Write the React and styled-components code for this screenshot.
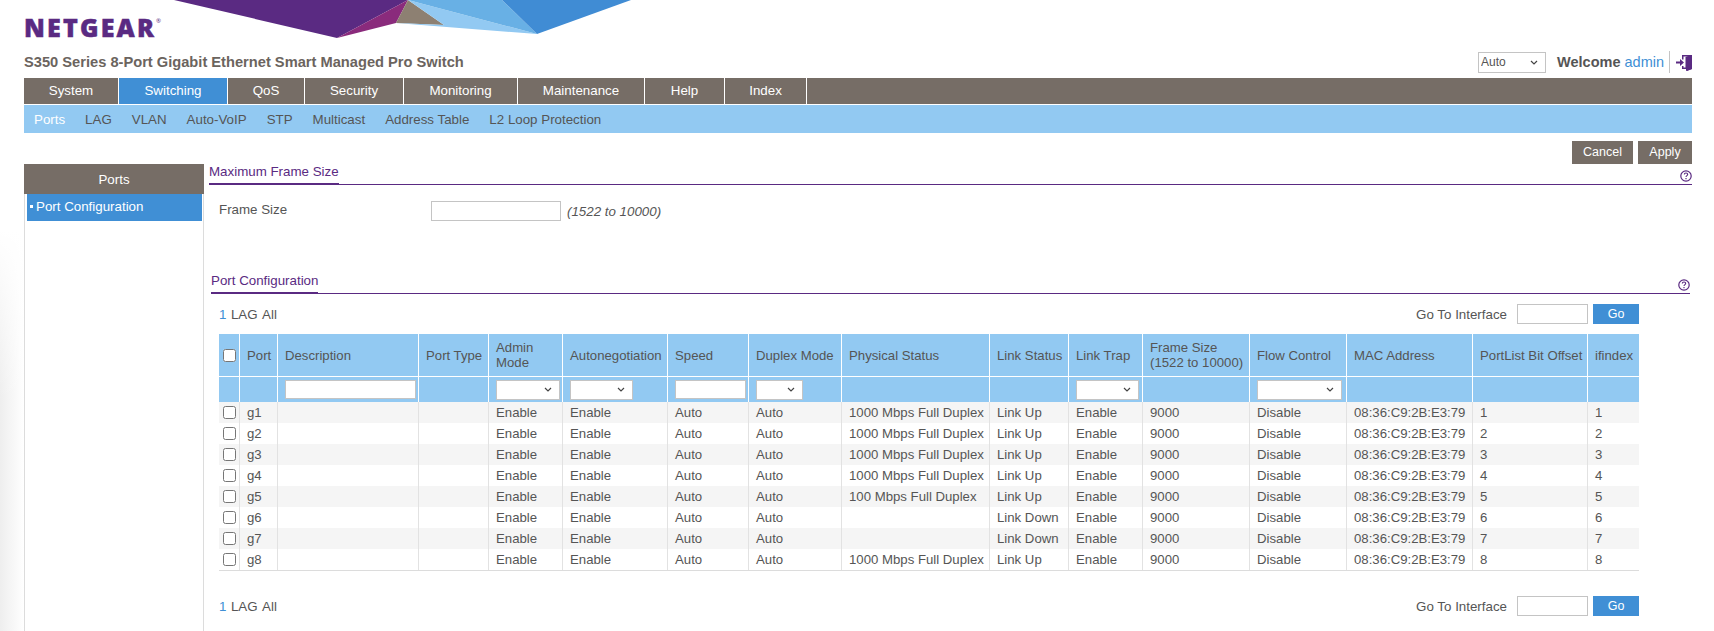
import React from "react";
import styled, { createGlobalStyle } from "styled-components";

const GlobalStyle = createGlobalStyle`
  html, body {
    margin: 0;
    padding: 0;
    background: #fff;
  }
  body {
    font-family: "Liberation Sans", Arial, sans-serif;
    font-size: 13.33px;
    color: #555;
  }
`;

const brown = "#766d66";
const blue = "#408fd5";
const sky = "#92c9f2";
const purple = "#5a2a82";

const chevron = `url("data:image/svg+xml,%3Csvg xmlns='http://www.w3.org/2000/svg' width='8' height='5' viewBox='0 0 8 5'%3E%3Cpath d='M1 1l3 3 3-3' fill='none' stroke='%23444' stroke-width='1.2'/%3E%3C/svg%3E")`;

const Page = styled.div`
  width: 1714px;
  height: 631px;
  overflow: hidden;
  background:
    linear-gradient(180deg, #fff 230px, rgba(255, 255, 255, 0) 400px),
    linear-gradient(90deg, #eee 0, #fff 24px);
`;

const Inner = styled.div`
  padding: 0 22px 0 24px;
  height: 631px;
  display: flex;
  flex-direction: column;
  box-sizing: border-box;
`;

const Top = styled.div`
  display: flex;
  height: 44px;
`;

const Logo = styled.div`
  width: 150px;
  padding-top: 13px;
  font-family: "Open Sans", sans-serif;
  font-weight: 800;
  font-size: 25px;
  line-height: 28px;
  letter-spacing: 2.2px;
  -webkit-text-stroke: 0.5px ${purple};
  color: ${purple};
  sup {
    font-size: 6px;
    font-weight: 400;
    line-height: 6px;
    vertical-align: 14px;
    letter-spacing: 0;
    -webkit-text-stroke: 0;
  }
`;

const Banner = styled.svg`
  display: block;
  width: 458px;
  height: 38px;
`;

const TitleRow = styled.div`
  display: flex;
  align-items: center;
  box-sizing: border-box;
  height: 34px;
  padding-top: 2px;
`;

const Title = styled.div`
  flex: 1;
  font-weight: 700;
  font-size: 14.67px;
  color: #6b645e;
`;

const Select = styled.select`
  display: block;
  box-sizing: border-box;
  width: ${(p) => p.$w}px;
  height: ${(p) => p.$h}px;
  padding: 0 0 0 2px;
  font: 12px "Liberation Sans", Arial, sans-serif;
  color: #555;
  appearance: none;
  background: #fff ${chevron} no-repeat right 7px center;
  border: 1px solid #c4c4c4;
  border-radius: 0;
`;

const Welcome = styled.div`
  margin-left: 11px;
  font-weight: 700;
  font-size: 14.5px;
  color: #555;
  span {
    font-weight: 400;
    color: ${blue};
  }
`;

const Logout = styled.div`
  margin-left: 5px;
  padding-left: 6px;
  height: 22px;
  border-left: 1px solid #c4c4c4;
  display: flex;
  align-items: center;
  svg {
    display: block;
  }
`;

const Nav = styled.nav`
  display: flex;
  height: 26px;
  background: ${brown};
`;

const NavItem = styled.div`
  width: ${(p) => p.$w}px;
  box-sizing: border-box;
  border-right: 1px solid #fff;
  text-align: center;
  line-height: 25px;
  color: #fff;
  background: ${(p) => (p.$active ? blue : "transparent")};
`;

const SubNav = styled.div`
  display: flex;
  gap: 20px;
  margin-top: 1px;
  padding-left: 10px;
  height: 28px;
  line-height: 29px;
  background: ${sky};
`;

const SubItem = styled.div`
  color: ${(p) => (p.$active ? "#fff" : "#555")};
`;

const Actions = styled.div`
  display: flex;
  justify-content: flex-end;
  gap: 5px;
  margin-top: 8px;
  height: 23px;
`;

const ActionButton = styled.div`
  width: ${(p) => p.$w}px;
  text-align: center;
  line-height: 22px;
  font-size: 12.5px;
  color: #fff;
  background: ${brown};
`;

const Body = styled.div`
  display: flex;
  flex: 1;
`;

const Side = styled.aside`
  width: 180px;
  box-sizing: border-box;
  border-left: 1px solid #dcdcdc;
  border-right: 1px solid #dcdcdc;
`;

const SideTitle = styled.div`
  margin: 0 -1px;
  height: 30px;
  line-height: 31px;
  text-align: center;
  color: #fff;
  background: ${brown};
`;

const SideItem = styled.div`
  display: flex;
  align-items: center;
  gap: 3px;
  margin: 0 1px 0 2px;
  height: 27px;
  padding: 0 0 2px 3px;
  box-sizing: border-box;
  color: #fff;
  background: ${blue};
  &::before {
    content: "";
    width: 3px;
    height: 3px;
    background: #fff;
  }
`;

const Main = styled.main`
  flex: 1;
  min-width: 0;
  padding-left: 5px;
`;

const SectionHead = styled.div`
  display: flex;
  justify-content: space-between;
  align-items: flex-end;
  height: 20px;
  margin: 0 ${(p) => p.$inset}px;
  border-bottom: 1px solid ${purple};
`;

const SectionTitle = styled.div`
  height: 100%;
  box-sizing: border-box;
  padding-bottom: 4px;
  border-bottom: 2px solid ${purple};
  margin-bottom: -1px;
  display: flex;
  align-items: flex-end;
  color: ${purple};
`;

const Help = styled.svg`
  display: block;
  margin-bottom: 2px;
`;

const FrameRow = styled.div`
  display: flex;
  align-items: center;
  margin-top: 16px;
  padding-left: 10px;
  height: 20px;
`;

const FrameLabel = styled.label`
  width: 212px;
  margin-bottom: 4px;
`;

const TextInput = styled.input`
  display: block;
  box-sizing: border-box;
  width: ${(p) => p.$w}px;
  height: ${(p) => p.$h}px;
  padding: 0 4px;
  border: 1px solid #c4c4c4;
  border-radius: 0;
  background: #fff;
  outline: none;
`;

const Hint = styled.em`
  margin-left: 6px;
`;

const PortArea = styled.div`
  margin-top: 52px;
`;

const Pager = styled.div`
  display: flex;
  align-items: center;
  justify-content: space-between;
  height: 20px;
  width: 1420px;
  margin-left: 10px;
  margin-top: ${(p) => p.$mt}px;
`;

const Pages = styled.div`
  display: flex;
  gap: 4.5px;
  span:first-child {
    color: ${blue};
  }
`;

const GoTo = styled.div`
  display: flex;
  align-items: center;
`;

const GoLabel = styled.span`
  margin-right: 10px;
`;

const GoButton = styled.div`
  width: 46px;
  height: 20px;
  margin-left: 5px;
  text-align: center;
  line-height: 20px;
  font-size: 12.5px;
  color: #fff;
  background: ${blue};
`;

const Table = styled.table`
  table-layout: fixed;
  border-collapse: separate;
  border-spacing: 0;
  width: 1420px;
  margin: 10px 0 0 10px;
  font-size: 13.2px;
  color: #555;
`;

const Th = styled.th`
  height: 43px;
  padding: 0 0 0 7px;
  box-sizing: border-box;
  border-left: 1px solid #fff;
  border-bottom: 1px solid #fff;
  font-weight: 400;
  line-height: 15px;
  text-align: left;
  white-space: nowrap;
  background: ${sky};
  &:first-child {
    border-left: 0;
    padding: 0;
  }
`;

const WrapLabel = styled.span`
  display: block;
  white-space: normal;
`;

const FilterCell = styled.td`
  height: 25px;
  padding: 0 0 0 7px;
  box-sizing: border-box;
  border-left: 1px solid #fff;
  background: ${sky};
  &:first-child {
    border-left: 0;
  }
`;

const Tr = styled.tr`
  background: ${(p) => (p.$odd ? "#f5f5f5" : "#fff")};
`;

const Td = styled.td`
  height: 21px;
  padding: 0 0 0 7px;
  box-sizing: border-box;
  border-left: 1px solid #e2e2e2;
  white-space: nowrap;
  overflow: hidden;
  &:first-child {
    border-left: 0;
    padding: 0;
  }
`;

const BottomRule = styled.tfoot`
  td {
    height: 0;
    padding: 0;
    border-top: 1px solid #dcdcdc;
  }
`;

const Check = styled.input.attrs({ type: "checkbox" })`
  display: block;
  margin: 0 auto;
  width: 13px;
  height: 13px;
`;

const columns = [20, 38, 141, 70, 74, 105, 81, 93, 148, 79, 74, 107, 97, 126, 115, 52];

const headers = [
  "Port",
  "Description",
  "Port Type",
  <WrapLabel>Admin Mode</WrapLabel>,
  "Autonegotiation",
  "Speed",
  "Duplex Mode",
  "Physical Status",
  "Link Status",
  "Link Trap",
  <>
    Frame Size
    <br />
    (1522 to 10000)
  </>,
  "Flow Control",
  "MAC Address",
  "PortList Bit Offset",
  "ifindex",
];

const gig = "1000 Mbps Full Duplex";
const ports = [
  ["g1", gig, "Link Up"],
  ["g2", gig, "Link Up"],
  ["g3", gig, "Link Up"],
  ["g4", gig, "Link Up"],
  ["g5", "100 Mbps Full Duplex", "Link Up"],
  ["g6", "", "Link Down"],
  ["g7", "", "Link Down"],
  ["g8", gig, "Link Up"],
];

const navItems = [
  ["System", 95],
  ["Switching", 109],
  ["QoS", 77],
  ["Security", 99],
  ["Monitoring", 114],
  ["Maintenance", 127],
  ["Help", 80],
  ["Index", 82],
];

const subItems = ["Ports", "LAG", "VLAN", "Auto-VoIP", "STP", "Multicast", "Address Table", "L2 Loop Protection"];

const HelpIcon = () => (
  <Help width="12" height="12" viewBox="0 0 12 12" fill="none">
    <circle cx="6" cy="6" r="5.2" stroke={purple} strokeWidth="1.2" />
    <path d="M4.3 4.6c0-1 .8-1.6 1.7-1.6s1.700.6 1.700 1.500c0 1.200-1.700 1.200-1.700 2.600" stroke={purple} strokeWidth="1.100" />
    <rect x="5.4" y="8" width="1.200" height="1.200" fill={purple} />
  </Help>
);

const PagerRow = ({ mt }) => (
  <Pager $mt={mt}>
    <Pages>
      <span>1</span>
      <span>LAG</span>
      <span>All</span>
    </Pages>
    <GoTo>
      <GoLabel>Go To Interface</GoLabel>
      <TextInput $w={71} $h={20} />
      <GoButton>Go</GoButton>
    </GoTo>
  </Pager>
);

const App = () => {
  return (
    <Page>
      <GlobalStyle />
      <Inner>
        <Top>
          <Logo>
            NETGEAR<sup>®</sup>
          </Logo>
          <Banner viewBox="175 0 458 38">
            <polygon points="175,0 409,0 338,38" fill="#5a2a82" />
            <polygon points="409,0 338,38 397,23" fill="#8a2b7c" />
            <polygon points="409,0 397,23 445,25" fill="#8d8072" />
            <polygon points="409,0 445,25 397,23 538,34" fill="#92c9f2" />
            <polygon points="409,0 503,0 538,34" fill="#68b0e5" />
            <polygon points="503,0 632,0 538,34" fill="#408cd4" />
          </Banner>
        </Top>
        <TitleRow>
          <Title>S350 Series 8-Port Gigabit Ethernet Smart Managed Pro Switch</Title>
          <Select $w={68} $h={21} defaultValue="Auto">
            <option>Auto</option>
          </Select>
          <Welcome>
            Welcome <span>admin</span>
          </Welcome>
          <Logout>
            <svg width="16" height="17" viewBox="0 0 16 17">
              <path d="M6 1h10v14l-5 2v-2H6v-3h1.500v1.500H9.500V3L13 2.500H7.500V5.500H6z" fill={purple} />
              <path d="M16 1v14l-6 2V3z" fill={purple} />
              <path d="M0 7.500h4V5l4 3.500L4 12V9.500H0z" fill={purple} />
            </svg>
          </Logout>
        </TitleRow>
        <Nav>
          {navItems.map(([label, w]) => (
            <NavItem key={label} $w={w} $active={label === "Switching"}>
              {label}
            </NavItem>
          ))}
        </Nav>
        <SubNav>
          {subItems.map((s) => (
            <SubItem key={s} $active={s === "Ports"}>
              {s}
            </SubItem>
          ))}
        </SubNav>
        <Actions>
          <ActionButton $w={61}>Cancel</ActionButton>
          <ActionButton $w={54}>Apply</ActionButton>
        </Actions>
        <Body>
          <Side>
            <SideTitle>Ports</SideTitle>
            <SideItem>Port Configuration</SideItem>
          </Side>
          <Main>
            <SectionHead $inset={0}>
              <SectionTitle>Maximum Frame Size</SectionTitle>
              <HelpIcon />
            </SectionHead>
            <FrameRow>
              <FrameLabel>Frame Size</FrameLabel>
              <TextInput $w={130} $h={20} />
              <Hint>(1522 to 10000)</Hint>
            </FrameRow>
            <PortArea>
              <SectionHead $inset={2}>
                <SectionTitle>Port Configuration</SectionTitle>
                <HelpIcon />
              </SectionHead>
              <PagerRow mt={10} />
              <Table>
                <colgroup>
                  {columns.map((w, i) => (
                    <col key={i} width={w} />
                  ))}
                </colgroup>
                <thead>
                  <tr>
                    <Th>
                      <Check />
                    </Th>
                    {headers.map((h, i) => (
                      <Th key={i}>{h}</Th>
                    ))}
                  </tr>
                  <tr>
                    <FilterCell />
                    <FilterCell />
                    <FilterCell>
                      <TextInput $w={131} $h={19} />
                    </FilterCell>
                    <FilterCell />
                    <FilterCell>
                      <Select $w={64} $h={20} />
                    </FilterCell>
                    <FilterCell>
                      <Select $w={63} $h={20} />
                    </FilterCell>
                    <FilterCell>
                      <TextInput $w={71} $h={19} />
                    </FilterCell>
                    <FilterCell>
                      <Select $w={47} $h={20} />
                    </FilterCell>
                    <FilterCell />
                    <FilterCell />
                    <FilterCell>
                      <Select $w={63} $h={20} />
                    </FilterCell>
                    <FilterCell />
                    <FilterCell>
                      <Select $w={85} $h={20} />
                    </FilterCell>
                    <FilterCell />
                    <FilterCell />
                    <FilterCell />
                  </tr>
                </thead>
                <tbody>
                  {ports.map(([name, phys, link], i) => (
                    <Tr key={name} $odd={i % 2 === 0}>
                      <Td>
                        <Check />
                      </Td>
                      <Td>{name}</Td>
                      <Td />
                      <Td />
                      <Td>Enable</Td>
                      <Td>Enable</Td>
                      <Td>Auto</Td>
                      <Td>Auto</Td>
                      <Td>{phys}</Td>
                      <Td>{link}</Td>
                      <Td>Enable</Td>
                      <Td>9000</Td>
                      <Td>Disable</Td>
                      <Td>08:36:C9:2B:E3:79</Td>
                      <Td>{i + 1}</Td>
                      <Td>{i + 1}</Td>
                    </Tr>
                  ))}
                </tbody>
                <BottomRule>
                  <tr>
                    <td colSpan={16} />
                  </tr>
                </BottomRule>
              </Table>
              <PagerRow mt={25} />
            </PortArea>
          </Main>
        </Body>
      </Inner>
    </Page>
  );
};

export default App;
